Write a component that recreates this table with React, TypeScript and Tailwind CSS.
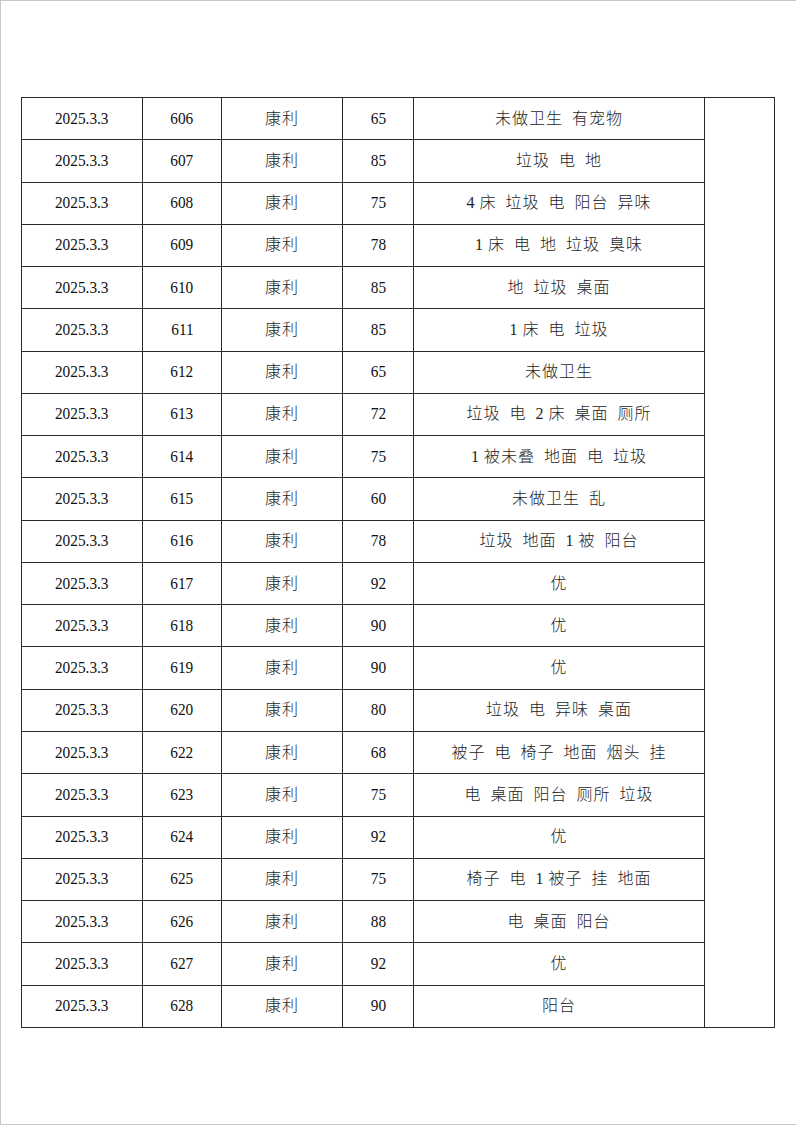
import React from "react";

const T = "\u2009";

const rows: [string, string, string][] = [
  ["606", "65", "未做卫生 有宠物"],
  ["607", "85", "垃圾 电 地"],
  ["608", "75", `4${T}床 垃圾 电 阳台 异味`],
  ["609", "78", `1${T}床 电 地 垃圾 臭味`],
  ["610", "85", "地 垃圾 桌面"],
  ["611", "85", `1${T}床 电 垃圾`],
  ["612", "65", "未做卫生"],
  ["613", "72", `垃圾 电 2${T}床 桌面 厕所`],
  ["614", "75", `1${T}被未叠 地面 电 垃圾`],
  ["615", "60", "未做卫生 乱"],
  ["616", "78", `垃圾 地面 1${T}被 阳台`],
  ["617", "92", "优"],
  ["618", "90", "优"],
  ["619", "90", "优"],
  ["620", "80", "垃圾 电 异味 桌面"],
  ["622", "68", "被子 电 椅子 地面 烟头 挂"],
  ["623", "75", "电 桌面 阳台 厕所 垃圾"],
  ["624", "92", "优"],
  ["625", "75", `椅子 电 1${T}被子 挂 地面`],
  ["626", "88", "电 桌面 阳台"],
  ["627", "92", "优"],
  ["628", "90", "阳台"],
];

const font = { fontFamily: '"Liberation Serif", "Noto Sans CJK SC", serif' };

function Num({ children }: { children: React.ReactNode }) {
  return (
    <span className="inline-block origin-center scale-x-[0.9] text-[17px] leading-none text-[#111]">
      {children}
    </span>
  );
}

function Cn({ children }: { children: React.ReactNode }) {
  return (
    <span className="inline-block text-[16px] font-light leading-none tracking-[1px] [word-spacing:4px] text-[#1e1e1e]">
      {children}
    </span>
  );
}

const cell = "border border-[#2a2a2a] p-0 text-center align-middle";

export default function App() {
  return (
    <div
      className="box-border h-[1125px] w-[796px] border-t border-l border-b border-[#c8c8c8] bg-white pt-[96px] pl-[20px]"
      style={font}
    >
      <table className="table-fixed border-collapse w-[753px]">
        <colgroup>
          <col className="w-[121px]" />
          <col className="w-[79px]" />
          <col className="w-[121px]" />
          <col className="w-[71px]" />
          <col className="w-[291px]" />
          <col className="w-[70px]" />
        </colgroup>
        <tbody>
          {rows.map(([room, score, note], i) => (
            <tr key={room} className="h-[42.27px]">
              <td className={cell}>
                <Num>2025.3.3</Num>
              </td>
              <td className={cell}>
                <Num>{room}</Num>
              </td>
              <td className={cell}>
                <Cn>康利</Cn>
              </td>
              <td className={cell}>
                <Num>{score}</Num>
              </td>
              <td className={cell}>
                <Cn>{note}</Cn>
              </td>
              {i === 0 && <td className={cell} rowSpan={rows.length}></td>}
            </tr>
          ))}
        </tbody>
      </table>
    </div>
  );
}
